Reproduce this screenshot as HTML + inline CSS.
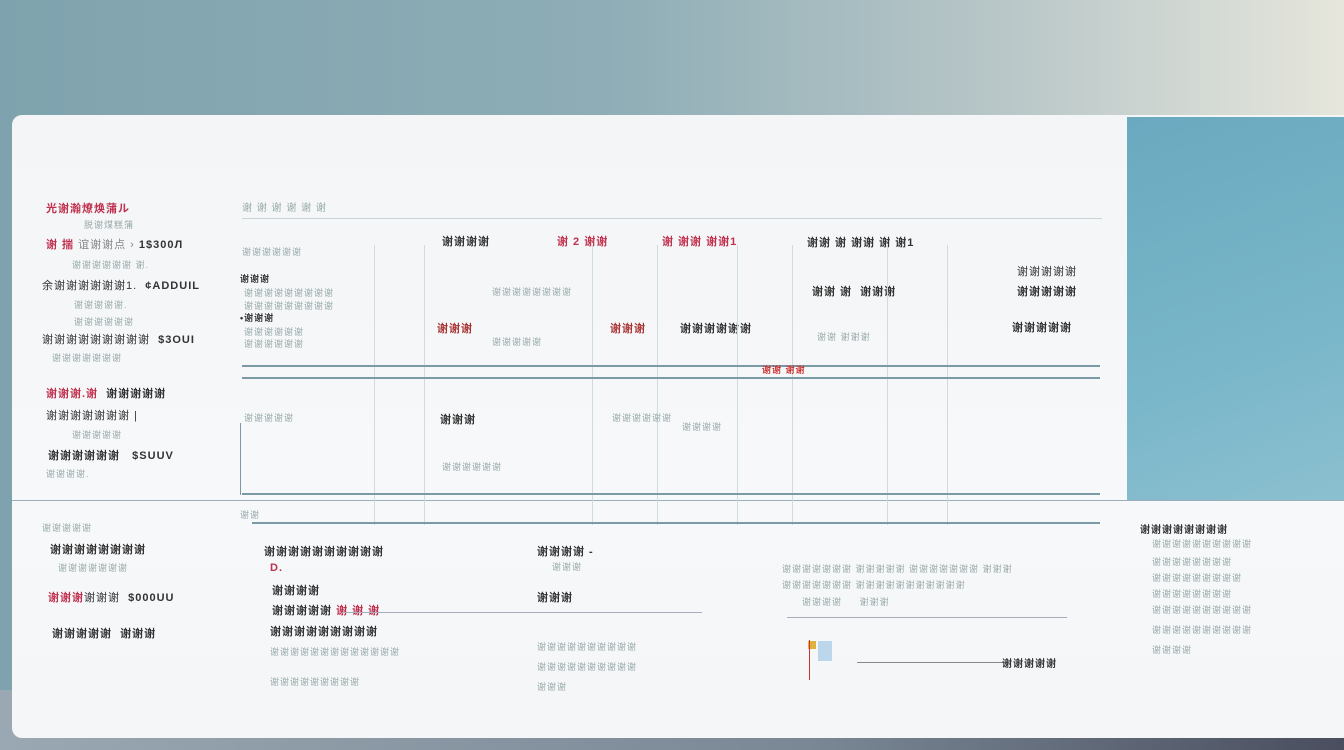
<!DOCTYPE html><html><head><meta charset="utf-8"><style>
*{margin:0;padding:0;box-sizing:border-box}
body{width:1344px;height:750px;overflow:hidden;position:relative;font-family:"Liberation Sans","Noto Sans CJK SC",sans-serif;
background:linear-gradient(90deg,#7fa3ae 0%,#8eadb6 45%,#b9c7c8 75%,#e6e6dc 100%);}
.bot{position:absolute;left:0;top:690px;width:1344px;height:60px;background:linear-gradient(90deg,#9aa8b3,#7a8896 60%,#4a4e5e)}
.card{position:absolute;left:12px;top:115px;width:1340px;height:623px;background:linear-gradient(180deg,#f3f5f7,#f7f8fa 60%,#f4f6f8);border-radius:10px;overflow:hidden}
.blue{position:absolute;left:1115px;top:2px;width:230px;height:383px;background:linear-gradient(160deg,#6aa9bf,#79b6c9 60%,#8cc0d0)}
.t{position:absolute;font-size:11px;color:#333;white-space:nowrap;letter-spacing:1px;font-weight:bold}
.r{color:#c0304d}.g{color:#9aa;font-weight:normal;font-size:9px}
.h{position:absolute;height:2px;background:#7c99a6}
.hl{position:absolute;height:1px;background:#c8d4da}
.v{position:absolute;width:1px;background:#d0dbe0}
</style></head><body>
<div class="bot"></div>
<div class="card">
<div class="blue"></div>
<div class="hl" style="left:0;top:385px;width:1115px;background:#9ab0bc"></div>
<div class="hl" style="left:1115px;top:385px;width:230px;background:#9ab0bc"></div>
<!-- left list -->
<div class="t r" style="left:34px;top:85px">光谢瀚燎焕蒲ル</div>
<div class="t g" style="left:72px;top:103px">脱谢煤糕蒲</div>
<div class="t r" style="left:34px;top:121px">谢 揣<span style="color:#888;font-weight:normal"> 谊谢谢点 › </span><span style="color:#333">1$300Л</span></div>
<div class="t g" style="left:60px;top:143px">谢谢谢谢谢谢 谢.</div>
<div class="t" style="left:30px;top:162px;font-weight:normal">余谢谢谢谢谢谢1. &nbsp;<b>¢ADDUIL</b></div>
<div class="t g" style="left:62px;top:183px">谢谢谢谢谢.</div>
<div class="t g" style="left:62px;top:200px">谢谢谢谢谢谢</div>
<div class="t" style="left:30px;top:216px;font-weight:normal">谢谢谢谢谢谢谢谢谢 &nbsp;<b>$3OUI</b></div>
<div class="t g" style="left:40px;top:236px">谢谢谢谢谢谢谢</div>
<div class="t r" style="left:34px;top:270px">谢谢谢.谢 &nbsp;<span style="color:#333">谢谢谢谢谢</span></div>
<div class="t" style="left:34px;top:292px;font-weight:normal">谢谢谢谢谢谢谢 |</div>
<div class="t g" style="left:60px;top:313px">谢谢谢谢谢</div>
<div class="t" style="left:36px;top:332px">谢谢谢谢谢谢 &nbsp;&nbsp;$SUUV</div>
<div class="t g" style="left:34px;top:352px">谢谢谢谢.</div>
<!-- table -->
<div class="t g" style="left:230px;top:84px;font-size:10px">谢 谢 谢 谢 谢 谢</div>
<div class="hl" style="left:230px;top:103px;width:860px"></div>
<div class="t" style="left:430px;top:118px">谢谢谢谢</div>
<div class="t r" style="left:545px;top:118px">谢 2 谢谢</div>
<div class="t r" style="left:650px;top:118px">谢 谢谢 谢谢1</div>
<div class="t" style="left:795px;top:119px">谢谢 谢 谢谢 谢 谢1</div>
<div class="t" style="left:1005px;top:148px;font-weight:normal">谢谢谢谢谢</div>
<div class="t" style="left:800px;top:168px">谢谢 谢 &nbsp;谢谢谢</div>
<div class="t" style="left:1005px;top:168px">谢谢谢谢谢</div>
<div class="t g" style="left:230px;top:130px">谢谢谢谢谢谢</div>
<div class="t" style="left:228px;top:157px;font-size:9px">谢谢谢</div>
<div class="t g" style="left:232px;top:171px">谢谢谢谢谢谢谢谢谢</div>
<div class="t g" style="left:232px;top:184px">谢谢谢谢谢谢谢谢谢</div>
<div class="t" style="left:228px;top:196px;font-size:9px">•谢谢谢</div>
<div class="t g" style="left:232px;top:210px">谢谢谢谢谢谢</div>
<div class="t g" style="left:232px;top:222px">谢谢谢谢谢谢</div>
<div class="t" style="left:425px;top:205px;color:#a33">谢谢谢</div>
<div class="t" style="left:598px;top:205px;color:#a33">谢谢谢</div>
<div class="t" style="left:668px;top:205px">谢谢谢谢谢谢</div>
<div class="t" style="left:1000px;top:204px">谢谢谢谢谢</div>
<div class="t g" style="left:480px;top:170px">谢谢谢谢谢谢谢谢</div>
<div class="t g" style="left:480px;top:220px">谢谢谢谢谢</div>
<div class="t g" style="left:805px;top:215px">谢谢 谢谢谢</div>
<div class="v" style="left:362px;top:130px;height:280px"></div>
<div class="v" style="left:412px;top:130px;height:280px"></div>
<div class="v" style="left:580px;top:130px;height:280px"></div>
<div class="v" style="left:645px;top:130px;height:280px"></div>
<div class="v" style="left:725px;top:130px;height:280px"></div>
<div class="v" style="left:780px;top:130px;height:280px"></div>
<div class="v" style="left:875px;top:130px;height:280px"></div>
<div class="v" style="left:935px;top:130px;height:280px"></div>
<div class="h" style="left:230px;top:250px;width:858px"></div>
<div class="h" style="left:230px;top:262px;width:858px"></div>
<div class="t" style="left:750px;top:248px;color:#c33;font-size:9px">谢谢 谢谢</div>
<div class="t" style="left:428px;top:296px">谢谢谢</div>
<div class="t g" style="left:232px;top:296px">谢谢谢谢谢</div>
<div class="t g" style="left:600px;top:296px">谢谢谢谢谢谢</div>
<div class="t g" style="left:670px;top:305px">谢谢谢谢</div>
<div class="t g" style="left:430px;top:345px">谢谢谢谢谢谢</div>
<div class="v" style="left:228px;top:308px;height:72px;background:#7c99a6"></div>
<div class="h" style="left:230px;top:378px;width:858px"></div>
<div class="h" style="left:240px;top:407px;width:848px"></div>
<div class="t g" style="left:228px;top:393px">谢谢</div>
<!-- bottom -->
<div class="t g" style="left:30px;top:406px">谢谢谢谢谢</div>
<div class="t" style="left:38px;top:426px">谢谢谢谢谢谢谢谢</div>
<div class="t g" style="left:46px;top:446px">谢谢谢谢谢谢谢</div>
<div class="t" style="left:36px;top:474px;font-weight:normal"><span class="r" style="font-weight:bold">谢谢谢</span>谢谢谢 &nbsp;<b>$000UU</b></div>
<div class="t" style="left:40px;top:510px">谢谢谢谢谢 &nbsp;谢谢谢</div>
<div class="t" style="left:252px;top:428px">谢谢谢谢谢谢谢谢谢谢</div>
<div class="t r" style="left:258px;top:447px">D.</div>
<div class="t" style="left:260px;top:467px">谢谢谢谢</div>
<div class="t" style="left:260px;top:487px">谢谢谢谢谢 <span class="r">谢 谢 谢</span></div>
<div class="t" style="left:258px;top:508px">谢谢谢谢谢谢谢谢谢</div>
<div class="t g" style="left:258px;top:530px">谢谢谢谢谢谢谢谢谢谢谢谢谢</div>
<div class="t g" style="left:258px;top:560px">谢谢谢谢谢谢谢谢谢</div>
<div class="t" style="left:525px;top:428px">谢谢谢谢 -</div>
<div class="t g" style="left:540px;top:445px">谢谢谢</div>
<div class="t" style="left:525px;top:474px">谢谢谢</div>
<div class="hl" style="left:330px;top:497px;width:360px;background:#aab"></div>
<div class="t g" style="left:525px;top:525px">谢谢谢谢谢谢谢谢谢谢</div>
<div class="t g" style="left:525px;top:545px">谢谢谢谢谢谢谢谢谢谢</div>
<div class="t g" style="left:525px;top:565px">谢谢谢</div>
<div class="t g" style="left:770px;top:447px">谢谢谢谢谢谢谢 谢谢谢谢谢 谢谢谢谢谢谢谢 谢谢谢</div>
<div class="t g" style="left:770px;top:463px">谢谢谢谢谢谢谢 谢谢谢谢谢谢谢谢谢谢谢</div>
<div class="t g" style="left:790px;top:480px">谢谢谢谢 &nbsp;&nbsp;&nbsp;&nbsp;谢谢谢</div>
<div class="hl" style="left:775px;top:502px;width:280px;background:#aab"></div>
<div style="position:absolute;left:796px;top:526px;width:8px;height:8px;background:#e0b040"></div>
<div style="position:absolute;left:806px;top:526px;width:14px;height:20px;background:#bcd6ec"></div>
<div style="position:absolute;left:797px;top:525px;width:1px;height:40px;background:#c33"></div>
<div class="hl" style="left:845px;top:547px;width:150px;background:#888"></div>
<div class="t" style="left:990px;top:540px;font-size:10px">谢谢谢谢谢</div>
<div class="t" style="left:1128px;top:406px;font-size:10px">谢谢谢谢谢谢谢谢</div>
<div class="t g" style="left:1140px;top:422px">谢谢谢谢谢谢谢谢谢谢</div>
<div class="t g" style="left:1140px;top:440px">谢谢谢谢谢谢谢谢</div>
<div class="t g" style="left:1140px;top:456px">谢谢谢谢谢谢谢谢谢</div>
<div class="t g" style="left:1140px;top:472px">谢谢谢谢谢谢谢谢</div>
<div class="t g" style="left:1140px;top:488px">谢谢谢谢谢谢谢谢谢谢</div>
<div class="t g" style="left:1140px;top:508px">谢谢谢谢谢谢谢谢谢谢</div>
<div class="t g" style="left:1140px;top:528px">谢谢谢谢</div>
</div>
</body></html>
